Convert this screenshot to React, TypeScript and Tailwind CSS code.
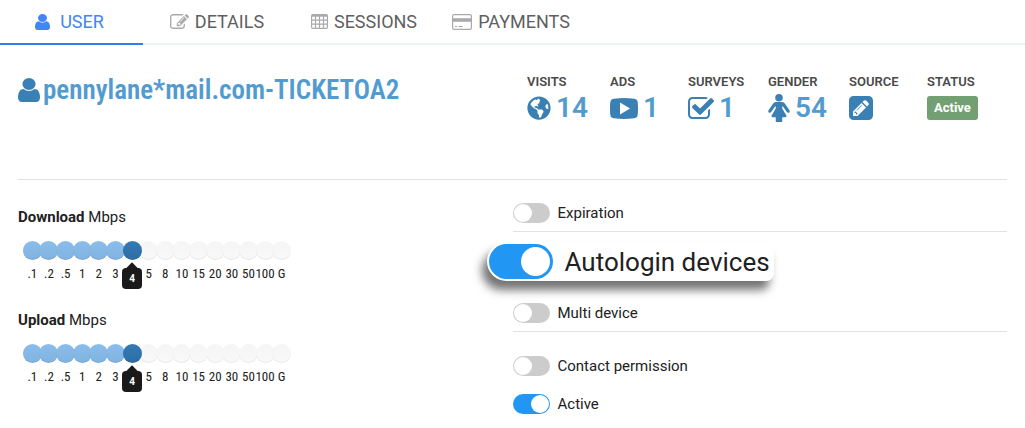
import { ChangeEvent, ReactNode, useState } from 'react';
import { FaGlobeAmericas } from 'react-icons/fa';

const speeds: string[] = ['.1', '.2', '.5', '1', '2', '3', '4', '5', '8', '10', '15', '20', '30', '50', '100', 'G'];

interface IconProps {
  className?: string;
}

function UserIcon({ className }: IconProps) {
  return (
    <svg viewBox="256 128 1280 1536" preserveAspectRatio="none" fill="currentColor" className={className} aria-hidden="true">
      <path d="M1536 1399q0 109-62.5 187t-150.5 78h-854q-88 0-150.5-78t-62.5-187q0-85 8.5-160.5t31.5-152 58.5-131 94-89 134.5-34.5q131 128 313 128t313-128q76 0 134.5 34.5t94 89 58.5 131 31.5 152 8.5 160.5zm-256-887q0 159-112.5 271.5t-271.5 112.5-271.5-112.5-112.5-271.5 112.5-271.5 271.5-112.5 271.5 112.5 112.5 271.5z" />
    </svg>
  );
}

function EditIcon({ className }: IconProps) {
  return (
    <svg viewBox="0 128 1792 1408" fill="currentColor" className={className} aria-hidden="true">
      <path d="M888 1184l116-116-152-152-116 116v56h96v96h56zm440-720q-16-16-33 1l-350 350q-17 17-1 33t33-1l350-350q17-17 1-33zm80 594v190q0 119-84.5 203.5t-203.5 84.5h-832q-119 0-203.5-84.5t-84.5-203.5v-832q0-119 84.5-203.5t203.5-84.5h832q63 0 117 25 15 7 18 23 3 17-9 29l-49 49q-14 14-32 8-23-6-45-6h-832q-66 0-113 47t-47 113v832q0 66 47 113t113 47h832q66 0 113-47t47-113v-126q0-13 9-22l64-64q15-15 35-7t20 29zm-96-738l288 288-672 672h-288v-288zm444 132l-92 92-288-288 92-92q28-28 68-28t68 28l152 152q28 28 28 68t-28 68z" />
    </svg>
  );
}

function TableIcon({ className }: IconProps) {
  return (
    <svg viewBox="0 0 17 15" fill="none" stroke="currentColor" className={className} aria-hidden="true">
      <rect x="0.6" y="0.6" width="15.8" height="13.8" rx="1.2" strokeWidth="1.2" />
      <path d="M1 1.5h15" strokeWidth="2.4" />
      <path d="M4.5 2v12M8.500 2v12M12.500 2v12M1 6.200h15M1 10.200h15" strokeWidth="1.200" />
    </svg>
  );
}

function CardIcon({ className }: IconProps) {
  return (
    <svg viewBox="0 0 20 16" fill="none" stroke="currentColor" className={className} aria-hidden="true">
      <rect x="0.6" y="0.6" width="18.8" height="14.8" rx="1.4" strokeWidth="1.2" />
      <path d="M1 6h18" strokeWidth="3.6" />
      <path d="M3 12.5h2M6.5 12.5h4" strokeWidth="1" />
    </svg>
  );
}

function PlayIcon({ className }: IconProps) {
  return (
    <svg viewBox="0 0 28 21" className={className} aria-hidden="true">
      <path fill="currentColor" d="M4 .7Q14-.5 24 .7q3.300.4 3.700 3.300.6 6.500 0 13-.4 2.900-3.700 3.300-10 1.200-20 0Q.7 19.900.3 17-.3 10.500.3 4 .7 1.100 4 .7Z" />
      <path fill="white" d="M10 4.500v12l10-6Z" />
    </svg>
  );
}

function CheckIcon({ className }: IconProps) {
  return (
    <svg viewBox="64 128 1664 1408" fill="currentColor" className={className} aria-hidden="true">
      <path d="M1472 930v318q0 119-84.5 203.5t-203.5 84.5h-832q-119 0-203.5-84.5t-84.5-203.5v-832q0-119 84.5-203.5t203.5-84.5h832q63 0 117 25 15 7 18 23 3 17-9 29l-49 49q-10 10-23 10-3 0-9-2-23-6-45-6h-832q-66 0-113 47t-47 113v832q0 66 47 113t113 47h832q66 0 113-47t47-113v-254q0-13 9-22l64-64q10-10 23-10 6 0 12 3 20 8 20 29zm231-489l-814 814q-24 24-57 24t-57-24l-430-430q-24-24-24-57t24-57l110-110q24-24 57-24t57 24l263 263 647-647q24-24 57-24t57 24l110 110q24 24 24 57t-24 57z" />
    </svg>
  );
}

function FemaleIcon({ className }: IconProps) {
  return (
    <svg viewBox="0 32 1280 1664" fill="currentColor" className={className} aria-hidden="true">
      <circle cx="640" cy="256" r="224" />
      <path d="M1280 1056q0 40-28 68t-68 28q-51 0-80-43l-227-341h-45v132l247 411q9 15 9 33 0 26-19 45t-45 19h-192v272q0 46-33 79t-79 33h-160q-46 0-79-33t-33-79v-272h-192q-26 0-45-19t-19-45q0-18 9-33l247-411v-132h-45l-227 341q-29 43-80 43-40 0-68-28t-28-68q0-29 16-53l256-384q73-107 176-107h384q103 0 176 107l256 384q16 24 16 53z" />
    </svg>
  );
}

function PencilIcon({ className }: IconProps) {
  return (
    <svg viewBox="0 128 1536 1536" fill="currentColor" className={className} aria-hidden="true">
      <path d="M404 1108l152 152-52 52h-56v-96h-96v-56zm414-390q14 13-3 30l-291 291q-17 17-30 3-14-13 3-30l291-291q17-17 30-3zm-274 690l544-544-288-288-544 544v288h288zm608-608l92-92q28-28 28-68t-28-68l-152-152q-28-28-68-28t-68 28l-92 92zm384-384v960q0 119-84.5 203.5t-203.5 84.5h-960q-119 0-203.5-84.5t-84.5-203.5v-960q0-119 84.5-203.5t203.5-84.5h960q119 0 203.5 84.5t84.5 203.5z" />
    </svg>
  );
}

interface StatProps {
  label: string;
  value?: string;
  icon: ReactNode;
}

function Stat({ label, value, icon }: StatProps) {
  return (
    <div>
      <dt className="text-[13px] font-semibold leading-4 text-[#4a4a4a]">{label}</dt>
      <dd className="flex h-9 items-center gap-[5px] text-[28px] font-semibold text-[#529bcf]">
        {icon}
        {value}
      </dd>
    </div>
  );
}

interface SpeedSliderProps {
  id: string;
  label: string;
}

function SpeedSlider({ id, label }: SpeedSliderProps) {
  const [value, setValue] = useState<number>(6);

  const handleChange = (e: ChangeEvent<HTMLInputElement>) => {
    setValue(Number(e.target.value));
  };

  const tickColor = (i: number): string => {
    if (i === value) return 'z-10 bg-linear-to-b from-[#337ab7] to-[#2e6da4]';
    if (i < value) return 'bg-linear-to-b from-[#89bdeb] to-[#82b3e0]';
    return 'bg-linear-to-b from-[#f5f5f5] to-[#f9f9f9]';
  };

  return (
    <div className="h-[103px]">
      <label htmlFor={id} className="block text-[15px] leading-5">
        <span className="font-bold">{label}</span> Mbps
      </label>
      <div className="relative ml-1.5 mt-[14px] w-[266px]">
        <div className="grid grid-cols-16">
          {speeds.map((speed, i) => (
            <div key={speed} className="flex flex-col items-center">
              <span className={`relative size-[19px] rounded-full shadow-[inset_0_-1px_0_rgba(0,0,0,0.07)] ${tickColor(i)}`} />
              {i === value ? (
                <span className="absolute top-[27px] z-10 h-[21px] w-5 rounded bg-[#1a1a1a] text-center text-[10px] font-bold leading-[21px] text-white before:absolute before:-top-1 before:left-[6px] before:size-2 before:rotate-45 before:bg-[#1a1a1a]">
                  <span className="relative">{speed}</span>
                </span>
              ) : (
                <span className="mt-1 font-['Roboto_Condensed','Roboto',sans-serif] text-[13px] leading-5">{speed}</span>
              )}
            </div>
          ))}
        </div>
        <input
          id={id}
          type="range"
          min={0}
          max={speeds.length - 1}
          value={value}
          onChange={handleChange}
          className="absolute inset-x-0 top-0 z-20 h-5 w-full cursor-pointer opacity-0"
        />
      </div>
    </div>
  );
}

interface ToggleProps {
  label: string;
  defaultChecked?: boolean;
  large?: boolean;
}

function Toggle({ label, defaultChecked = false, large = false }: ToggleProps) {
  if (large) {
    return (
      <label className="relative -ml-[26px] flex h-[39px] w-fit items-center gap-3 rounded-l-[20px] rounded-r-lg bg-white pl-0.5 pr-1 text-[26px] leading-8 shadow-[-5px_9px_10px_rgba(0,0,0,0.55)]">
        <input
          type="checkbox"
          defaultChecked={defaultChecked}
          className="relative h-[35px] w-16 cursor-pointer appearance-none rounded-full bg-[#ccc] before:absolute before:left-[3px] before:top-[3px] before:size-[29px] before:rounded-full before:bg-white checked:bg-[#2196f3] checked:before:left-8"
        />
        {label}
      </label>
    );
  }

  return (
    <label className="flex h-5 w-fit items-center gap-2 text-[15px] leading-5">
      <input
        type="checkbox"
        defaultChecked={defaultChecked}
        className="relative h-5 w-[37px] cursor-pointer appearance-none rounded-full bg-[#ccc] before:absolute before:left-px before:top-px before:size-[18px] before:rounded-full before:bg-white checked:bg-[#2196f3] checked:before:left-[18px]"
      />
      {label}
    </label>
  );
}

function App() {
  return (
    <div className="min-h-screen bg-white font-['Roboto',sans-serif] text-[#212121]">
      <nav className="flex h-[45px] border-b-2 border-[#eef4f4] text-lg text-[#5f5f5f]">
        <a href="#user" className="-mb-[2px] flex w-[143px] items-center justify-center gap-2.5 border-b-2 border-[#2f80ed] pr-1 text-[#4285f4]">
          <UserIcon className="h-4 w-[15px]" />
          USER
        </a>
        <a href="#details" className="flex w-[148px] items-center justify-center gap-1.5">
          <EditIcon className="h-[15px] w-[19px] text-[#aaa]" />
          DETAILS
        </a>
        <a href="#sessions" className="flex w-[146px] items-center justify-center gap-1.5">
          <TableIcon className="h-[15px] w-[17px] text-[#aaa]" />
          SESSIONS
        </a>
        <a href="#payments" className="flex w-[148px] items-center justify-center gap-1.5">
          <CardIcon className="h-4 w-5 text-[#aaa]" />
          PAYMENTS
        </a>
      </nav>

      <main className="px-[18px]">
        <header className="flex h-[135px] justify-between border-b border-[#e2e2e2] pt-[29px]">
          <h1 className="flex h-8 items-center gap-[3px] font-['Roboto_Condensed','Roboto',sans-serif] text-[27px] font-semibold text-[#529bcf]">
            <UserIcon className="h-6 w-[22px] text-[#3a80b4]" />
            pennylane*mail.com-TICKETOA2
          </h1>
          <dl className="grid grid-cols-[83px_78px_80px_81px_78px_80px]">
            <Stat label="VISITS" value="14" icon={<FaGlobeAmericas className="size-6 text-[#3a80b4]" />} />
            <Stat label="ADS" value="1" icon={<PlayIcon className="h-[21px] w-7 text-[#3a80b4]" />} />
            <Stat label="SURVEYS" value="1" icon={<CheckIcon className="h-[22px] w-[26px] text-[#3a80b4]" />} />
            <Stat label="GENDER" value="54" icon={<FemaleIcon className="h-7 w-[22px] text-[#3a80b4]" />} />
            <Stat label="SOURCE" icon={<PencilIcon className="size-6 text-[#3a80b4]" />} />
            <Stat
              label="STATUS"
              icon={<span className="rounded-[3px] bg-[#72a072] px-[7px] text-[13px] font-bold leading-6 text-white">Active</span>}
            />
          </dl>
        </header>

        <div className="grid grid-cols-2">
          <section className="pt-[27px]">
            <SpeedSlider id="download" label="Download" />
            <SpeedSlider id="upload" label="Upload" />
          </section>

          <section>
            <div className="border-b border-[#e2e2e2] pb-2 pt-[23px]">
              <Toggle label="Expiration" />
            </div>
            <div className="border-b border-[#e2e2e2] pb-2 pt-2.5">
              <Toggle label="Autologin devices" defaultChecked large />
              <div className="pt-[22px]">
                <Toggle label="Multi device" />
              </div>
            </div>
            <div className="flex flex-col gap-[18px] pt-6">
              <Toggle label="Contact permission" />
              <Toggle label="Active" defaultChecked />
            </div>
          </section>
        </div>
      </main>
    </div>
  );
}

export default App;
